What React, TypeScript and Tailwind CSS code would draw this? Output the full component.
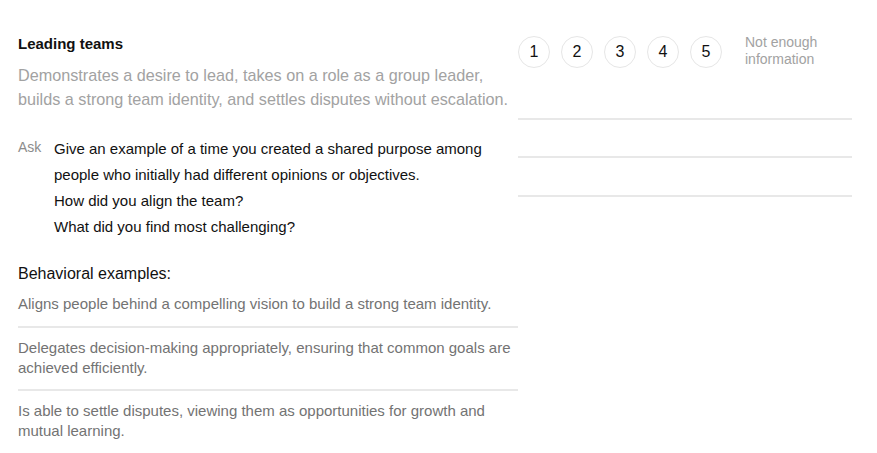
import React from "react";

const font = { fontFamily: '"Liberation Sans", Arial, sans-serif' };

export default function App() {
  const questions = [
    "Give an example of a time you created a shared purpose among",
    "people who initially had different opinions or objectives.",
    "How did you align the team?",
    "What did you find most challenging?",
  ];
  const examples = [
    "Aligns people behind a compelling vision to build a strong team identity.",
    "Delegates decision-making appropriately, ensuring that common goals are achieved efficiently.",
    "Is able to settle disputes, viewing them as opportunities for growth and mutual learning.",
  ];
  return (
    <div className="flex bg-white pl-[18px] pt-[33px] w-[877px] h-[453px] font-['Liberation_Sans',Arial,sans-serif]" style={font}>
      <div className="w-[500px] flex flex-col">
        <div className="text-[15px] font-bold leading-[22px] text-[#111]">Leading teams</div>
        <div className="mt-[8px] text-[16.2px] leading-[24px] text-[#a2a2a2]">
          Demonstrates a desire to lead, takes on a role as a group leader,
          <br />
          builds a strong team identity, and settles disputes without escalation.
        </div>
        <div className="mt-[25px] flex">
          <div className="w-[36px] text-[14px] leading-[22px] text-[#8c8c8c]">Ask</div>
          <div className="flex flex-col text-[15px] leading-[26px] text-[#111]">
            {questions.map((q) => (
              <div key={q}>{q}</div>
            ))}
          </div>
        </div>
        <div className="mt-[22px] text-[16px] leading-[24px] text-[#111]">Behavioral examples:</div>
        <div className="mt-[8px] flex flex-col">
          {examples.map((e, i) => (
            <div
              key={e}
              className={
                i === 0
                  ? "pb-[12px] border-b-2 border-[#e8e8e8] text-[15px] leading-[20px] text-[#737373]"
                  : i === 1
                  ? "pt-[10px] pb-[11px] border-b-2 border-[#e8e8e8] text-[15px] leading-[20px] text-[#737373]"
                  : "pt-[10px] text-[15px] leading-[20px] text-[#737373]"
              }
            >
              {e}
            </div>
          ))}
        </div>
      </div>
      <div className="w-[334px] flex flex-col">
        <div className="flex items-start">
          <div className="flex gap-[11px] mt-[3px]">
            {[1, 2, 3, 4, 5].map((n) => (
              <div
                key={n}
                className="w-[32px] h-[32px] rounded-full border border-[#e6e6e6] flex items-center justify-center text-[16px] text-[#111]"
              >
                {n}
              </div>
            ))}
          </div>
          <div className="ml-[23px] mt-[1px] text-[14px] leading-[17px] text-[#a2a2a2]">
            Not enough
            <br />
            information
          </div>
        </div>
        <div className="mt-[50px] h-[2px] bg-[#e8e8e8]" />
        <div className="mt-[36px] h-[2px] bg-[#e8e8e8]" />
        <div className="mt-[37px] h-[2px] bg-[#e8e8e8]" />
      </div>
    </div>
  );
}
